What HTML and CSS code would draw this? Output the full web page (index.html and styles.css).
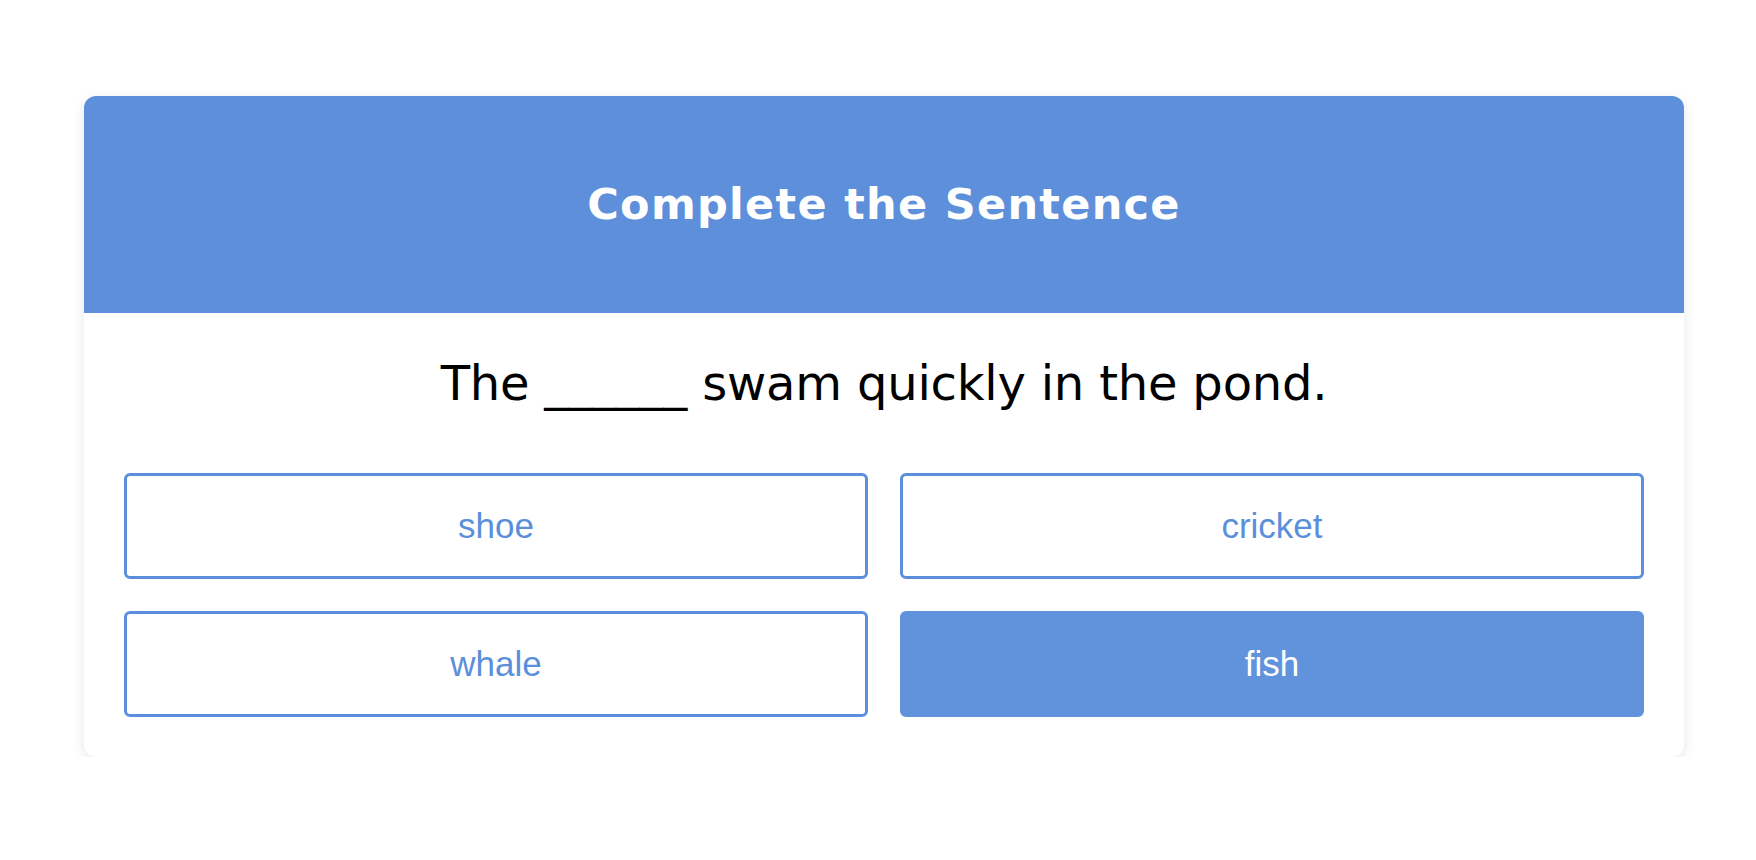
FILE: index.html
```html
<!DOCTYPE html>
<html lang="en">
<head>
<meta charset="utf-8">
<title>Complete the Sentence</title>
<link rel="stylesheet" href="styles.css">
</head>
<body>
<div class="page">
  <div class="card">
    <div class="card-header">
      <h1 class="title">Complete the Sentence</h1>
    </div>
    <div class="card-body">
      <p class="sentence">The ______ swam quickly in the pond.</p>
      <div class="options">
        <button class="option">shoe</button>
        <button class="option">cricket</button>
        <button class="option">whale</button>
        <button class="option selected">fish</button>
      </div>
    </div>
  </div>
</div>
</body>
</html>
```

FILE: styles.css
```css
html, body {
  margin: 0;
  padding: 0;
  background: #ffffff;
}

.page {
  padding: 96px 72px 0 84px;
}

.card {
  width: 1600px;
  background: #ffffff;
  border-radius: 12px;
  box-shadow: 0 3px 12px rgba(0, 0, 0, 0.1);
  overflow: hidden;
}

.card-header {
  height: 217px;
  background: #5e8fdb;
  display: flex;
  align-items: center;
  justify-content: center;
}

.title {
  margin: 0;
  font-family: "DejaVu Sans", sans-serif;
  font-weight: 700;
  font-size: 43px;
  line-height: 1;
  letter-spacing: 1.3px;
  color: #ffffff;
}

.card-body {
  padding: 40px 40px 40px;
}

.sentence {
  margin: 0 0 60px;
  text-align: center;
  font-family: "DejaVu Sans", sans-serif;
  font-size: 48px;
  line-height: 60px;
  letter-spacing: -0.2px;
  color: #000000;
}

.options {
  display: grid;
  grid-template-columns: 1fr 1fr;
  gap: 32px;
}

.option {
  height: 106px;
  border: 3px solid #5b8fdb;
  border-radius: 6px;
  background: #ffffff;
  color: #5b8fdb;
  font-family: "Liberation Sans", Arial, sans-serif;
  font-size: 35px;
  padding: 0;
  cursor: pointer;
}

.option.selected {
  background: #6192dc;
  border-color: #6192dc;
  color: #ffffff;
}
```
